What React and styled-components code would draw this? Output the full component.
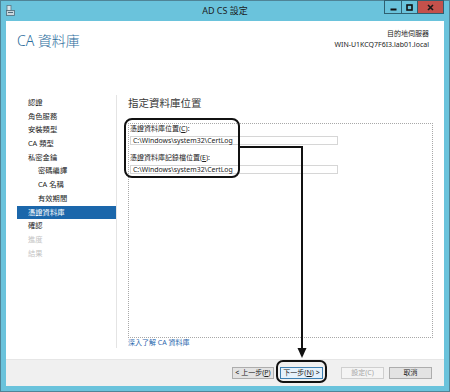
import React from "react";
import styled, { createGlobalStyle } from "styled-components";

const GlobalStyle = createGlobalStyle`
  html, body {
    margin: 0;
    padding: 0;
    background: #ffffff;
  }
  body {
    font-family: "Noto Sans", "Noto Sans CJK TC", sans-serif;
  }
`;

const FONT = `"Noto Sans", "Noto Sans CJK TC", sans-serif`;

const Window = styled.div`
  position: relative;
  width: 450px;
  height: 392px;
  box-sizing: border-box;
  border: 1px solid #4f8497;
  background: #6ac3dc;
  padding: 0 5px 5px;
  display: flex;
  flex-direction: column;
  font-family: ${FONT};
`;

const TitleBar = styled.div`
  height: 20px;
  display: grid;
  grid-template-columns: 1fr auto 1fr;
  align-items: start;
`;

const AppIcon = styled.div`
  padding-top: 4px;
  line-height: 0;
`;

const Title = styled.div`
  font-size: 9px;
  line-height: 20px;
  color: #1c1c1c;
`;

const Controls = styled.div`
  justify-self: end;
  display: flex;
  margin-top: -1px;
`;

const CtrlButton = styled.div`
  width: ${(p) => p.$w}px;
  height: 14px;
  box-sizing: border-box;
  border: 1px solid #2f5f70;
  margin-left: -1px;
  background: ${(p) => (p.$close ? "#c4514b" : "#6ac3dc")};
  display: flex;
  align-items: center;
  justify-content: center;
`;

const Body = styled.div`
  flex: 1;
  background: #ffffff;
  display: flex;
  flex-direction: column;
`;

const Header = styled.div`
  height: 71px;
  box-sizing: border-box;
  padding: 7px 15px 0 11px;
  display: flex;
  justify-content: space-between;
  align-items: flex-start;
`;

const PageTitle = styled.div`
  margin-top: 6px;
  font-size: 14px;
  line-height: 14px;
  font-weight: 300;
  color: #2b6c9c;
`;

const TargetBox = styled.div`
  text-align: right;
  font-size: 7px;
  line-height: 11px;
  color: #222;
`;

const Main = styled.div`
  flex: 1;
  display: flex;
  padding: 3px 0 11px;
  min-height: 0;
`;

const Nav = styled.div`
  width: 110px;
  border-right: 1px solid #e4e4e4;
  padding-top: 1px;
  display: flex;
  flex-direction: column;
`;

const NavItem = styled.div`
  height: 13.7px;
  margin-left: 11px;
  padding-left: ${(p) => (p.$sub ? 21 : 11)}px;
  font-size: 7.3px;
  line-height: 13.7px;
  background: ${(p) => (p.$active ? "#1b67ab" : "transparent")};
  color: ${(p) => (p.$active ? "#ffffff" : p.$disabled ? "#c4c4c4" : "#222")};
`;

const Content = styled.div`
  flex: 1;
  padding: 1px 11px 0 11px;
  display: flex;
  flex-direction: column;
`;

const SectionTitle = styled.div`
  font-size: 10.5px;
  line-height: 14px;
  color: #3a3a3a;
  margin-bottom: 13px;
`;

const DottedBox = styled.div`
  flex: 1;
  border: 1px dotted #a8a8a8;
  padding: 0 1px;
  display: flex;
  flex-direction: column;
  gap: 8px;
`;

const Field = styled.div`
  display: flex;
  flex-direction: column;
`;

const FieldLabel = styled.div`
  font-size: 7px;
  line-height: 10px;
  color: #222;
  margin-bottom: 2px;
`;

const PathInput = styled.div`
  width: 208px;
  height: 9px;
  box-sizing: border-box;
  border: 1px solid #d6d6d6;
  padding-left: 2px;
  font-size: 6.9px;
  line-height: 7px;
  color: #222;
  white-space: nowrap;
`;

const HelpLink = styled.div`
  font-size: 7px;
  line-height: 10px;
  color: #2a66ad;
`;

const Footer = styled.div`
  height: 27px;
  box-sizing: border-box;
  background: #f0f0f0;
  border-top: 1px solid #e6e6e6;
  display: flex;
  align-items: center;
  justify-content: flex-end;
  padding-right: 12px;
`;

const Button = styled.div`
  width: ${(p) => p.$w || 43}px;
  height: 12px;
  box-sizing: border-box;
  margin-left: ${(p) => p.$gap || 0}px;
  border: 1px solid ${(p) => (p.$default ? "#3c7fb1" : p.$disabled ? "#cfcfcf" : "#adadad")};
  background: ${(p) => (p.$default ? "#e5f1fb" : p.$disabled ? "#f4f4f4" : "#e3e3e3")};
  color: ${(p) => (p.$disabled ? "#a6a6a6" : "#222")};
  font-size: 7px;
  line-height: 10px;
  text-align: center;
  white-space: nowrap;
`;

const Overlay = styled.svg`
  position: absolute;
  left: -1px;
  top: -1px;
  pointer-events: none;
`;

const navItems = [
  { t: "認證" },
  { t: "角色服務" },
  { t: "安裝類型" },
  { t: "CA 類型" },
  { t: "私密金鑰" },
  { t: "密碼編譯", sub: true },
  { t: "CA 名稱", sub: true },
  { t: "有效期間", sub: true },
  { t: "憑證資料庫", active: true },
  { t: "確認" },
  { t: "進度", disabled: true },
  { t: "結果", disabled: true },
];

export default function App() {
  return (
    <>
      <GlobalStyle />
      <Window>
        <TitleBar>
          <AppIcon>
            <svg width="9" height="11" viewBox="0 0 9 11">
              <rect x="1" y="0.5" width="4" height="5" fill="#d8e4ea" stroke="#5b7784" strokeWidth="0.8" />
              <rect x="0.5" y="5.5" width="8" height="5" fill="#c9d6dd" stroke="#4f6b78" strokeWidth="0.8" />
              <rect x="2" y="7" width="5" height="1" fill="#4f6b78" />
            </svg>
          </AppIcon>
          <Title>AD CS 設定</Title>
          <Controls>
            <CtrlButton $w={18}>
              <svg width="7" height="7" viewBox="0 0 7 7">
                <rect x="0.5" y="4.5" width="6" height="2" fill="#111" />
              </svg>
            </CtrlButton>
            <CtrlButton $w={17}>
              <svg width="7" height="7" viewBox="0 0 7 7">
                <rect x="1" y="1" width="5" height="5" fill="none" stroke="#111" strokeWidth="1.6" />
              </svg>
            </CtrlButton>
            <CtrlButton $w={27} $close>
              <svg width="7" height="7" viewBox="0 0 7 7">
                <path d="M1 1 L6 6 M6 1 L1 6" stroke="#1a1a1a" strokeWidth="1.6" />
              </svg>
            </CtrlButton>
          </Controls>
        </TitleBar>
        <Body>
          <Header>
            <PageTitle>CA 資料庫</PageTitle>
            <TargetBox>
              <div>目的地伺服器</div>
              <div>WIN-U1KCQ7F6I3.lab01.local</div>
            </TargetBox>
          </Header>
          <Main>
            <Nav>
              {navItems.map((n) => (
                <NavItem key={n.t} $sub={n.sub} $active={n.active} $disabled={n.disabled}>
                  {n.t}
                </NavItem>
              ))}
            </Nav>
            <Content>
              <SectionTitle>指定資料庫位置</SectionTitle>
              <DottedBox>
                <Field>
                  <FieldLabel>憑證資料庫位置(<u>C</u>):</FieldLabel>
                  <PathInput>C:\Windows\system32\CertLog</PathInput>
                </Field>
                <Field>
                  <FieldLabel>憑證資料庫記錄檔位置(<u>E</u>):</FieldLabel>
                  <PathInput>C:\Windows\system32\CertLog</PathInput>
                </Field>
              </DottedBox>
              <HelpLink>深入了解 CA 資料庫</HelpLink>
            </Content>
          </Main>
          <Footer>
            <Button $w={42}>&lt; 上一步(<u>P</u>)</Button>
            <Button $gap={6} $default>下一步(<u>N</u>) &gt;</Button>
            <Button $gap={18} $disabled>設定(C)</Button>
            <Button $gap={5}>取消</Button>
          </Footer>
        </Body>
        <Overlay width="450" height="392" viewBox="0 0 450 392">
          <rect x="125" y="119" width="114" height="58" rx="7" fill="none" stroke="#111" strokeWidth="2" />
          <path d="M239 147 H302 V349" fill="none" stroke="#111" strokeWidth="2" />
          <polygon points="297.5,348 306.5,348 302,358" fill="#111" />
          <rect x="277" y="361" width="49" height="21" rx="6" fill="none" stroke="#111" strokeWidth="2" />
        </Overlay>
      </Window>
    </>
  );
}
